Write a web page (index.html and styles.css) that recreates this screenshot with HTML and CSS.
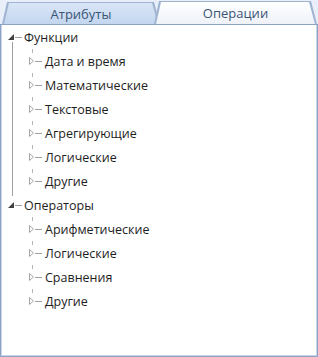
FILE: index.html
```html
<!DOCTYPE html>
<html lang="ru">
<head>
    <meta charset="UTF-8">
    <title>Операции</title>
    <link rel="stylesheet" href="styles.css">
</head>
<body>
    <div class="tabs">
        <div class="tab tab-left"><div class="tab-face">Атрибуты</div></div>
        <div class="tab tab-right active"><div class="tab-face">Операции</div></div>
    </div>

    <div class="panel">
        <ul class="tree">
            <li class="group">
                <div class="row top">
                    <svg width="14" height="24" viewBox="0 0 14 24">
                        <polygon points="6,9 6,15 0,15" fill="#404040"/>
                        <line x1="7" y1="12.5" x2="14" y2="12.5" stroke="#a0a0a0"/>
                        <line x1="4.5" y1="17" x2="4.5" y2="24" stroke="#a0a0a0"/>
                    </svg>
                    <span>Функции</span>
                </div>
                <ul class="children lined">
                    <li class="row child"><svg width="14" height="24" viewBox="0 0 14 24"><line x1="4.5" y1="0" x2="4.5" y2="4" stroke="#b4b4b4"/><polygon points="1.5,8.5 5.5,12 1.5,15.5" fill="none" stroke="#a8a8a8"/><line x1="7" y1="12.5" x2="14" y2="12.5" stroke="#a0a0a0"/></svg><span>Дата и время</span></li>
                    <li class="row child"><svg width="14" height="24" viewBox="0 0 14 24"><line x1="4.5" y1="0" x2="4.5" y2="4" stroke="#b4b4b4"/><polygon points="1.5,8.5 5.5,12 1.5,15.5" fill="none" stroke="#a8a8a8"/><line x1="7" y1="12.5" x2="14" y2="12.5" stroke="#a0a0a0"/></svg><span>Математические</span></li>
                    <li class="row child"><svg width="14" height="24" viewBox="0 0 14 24"><line x1="4.5" y1="0" x2="4.5" y2="4" stroke="#b4b4b4"/><polygon points="1.5,8.5 5.5,12 1.5,15.5" fill="none" stroke="#a8a8a8"/><line x1="7" y1="12.5" x2="14" y2="12.5" stroke="#a0a0a0"/></svg><span>Текстовые</span></li>
                    <li class="row child"><svg width="14" height="24" viewBox="0 0 14 24"><line x1="4.5" y1="0" x2="4.5" y2="4" stroke="#b4b4b4"/><polygon points="1.5,8.5 5.5,12 1.5,15.5" fill="none" stroke="#a8a8a8"/><line x1="7" y1="12.5" x2="14" y2="12.5" stroke="#a0a0a0"/></svg><span>Агрегирующие</span></li>
                    <li class="row child"><svg width="14" height="24" viewBox="0 0 14 24"><line x1="4.5" y1="0" x2="4.5" y2="4" stroke="#b4b4b4"/><polygon points="1.5,8.5 5.5,12 1.5,15.5" fill="none" stroke="#a8a8a8"/><line x1="7" y1="12.5" x2="14" y2="12.5" stroke="#a0a0a0"/></svg><span>Логические</span></li>
                    <li class="row child"><svg width="14" height="24" viewBox="0 0 14 24"><line x1="4.5" y1="0" x2="4.5" y2="4" stroke="#b4b4b4"/><polygon points="1.5,8.5 5.5,12 1.5,15.5" fill="none" stroke="#a8a8a8"/><line x1="7" y1="12.5" x2="14" y2="12.5" stroke="#a0a0a0"/></svg><span>Другие</span></li>
                </ul>
            </li>
            <li class="group">
                <div class="row top">
                    <svg width="14" height="24" viewBox="0 0 14 24">
                        <line x1="4.5" y1="0" x2="4.5" y2="3" stroke="#a0a0a0"/>
                        <polygon points="6,9 6,15 0,15" fill="#404040"/>
                        <line x1="7" y1="12.5" x2="14" y2="12.5" stroke="#a0a0a0"/>
                    </svg>
                    <span>Операторы</span>
                </div>
                <ul class="children">
                    <li class="row child"><svg width="14" height="24" viewBox="0 0 14 24"><line x1="4.5" y1="0" x2="4.5" y2="4" stroke="#b4b4b4"/><polygon points="1.5,8.5 5.5,12 1.5,15.5" fill="none" stroke="#a8a8a8"/><line x1="7" y1="12.5" x2="14" y2="12.5" stroke="#a0a0a0"/></svg><span>Арифметические</span></li>
                    <li class="row child"><svg width="14" height="24" viewBox="0 0 14 24"><line x1="4.5" y1="0" x2="4.5" y2="4" stroke="#b4b4b4"/><polygon points="1.5,8.5 5.5,12 1.5,15.5" fill="none" stroke="#a8a8a8"/><line x1="7" y1="12.5" x2="14" y2="12.5" stroke="#a0a0a0"/></svg><span>Логические</span></li>
                    <li class="row child"><svg width="14" height="24" viewBox="0 0 14 24"><line x1="4.5" y1="0" x2="4.5" y2="4" stroke="#b4b4b4"/><polygon points="1.5,8.5 5.5,12 1.5,15.5" fill="none" stroke="#a8a8a8"/><line x1="7" y1="12.5" x2="14" y2="12.5" stroke="#a0a0a0"/></svg><span>Сравнения</span></li>
                    <li class="row child"><svg width="14" height="24" viewBox="0 0 14 24"><line x1="4.5" y1="0" x2="4.5" y2="4" stroke="#b4b4b4"/><polygon points="1.5,8.5 5.5,12 1.5,15.5" fill="none" stroke="#a8a8a8"/><line x1="7" y1="12.5" x2="14" y2="12.5" stroke="#a0a0a0"/></svg><span>Другие</span></li>
                </ul>
            </li>
        </ul>
    </div>
</body>
</html>
```

FILE: styles.css
```css
html, body {
    margin: 0;
    padding: 0;
}
body {
    width: 318px;
    height: 357px;
    background-color: #e9eff8;
    font-family: 'Open Sans', 'Noto Sans', sans-serif;
    font-size: 12.5px;
    color: #1e1e1e;
    display: flex;
    flex-direction: column;
    overflow: hidden;
}
.tabs {
    display: flex;
    height: 24px;
    flex-shrink: 0;
}
.tab {
    background-color: #9fb3d2;
    height: 23px;
    margin-top: 1px;
    padding: 1px 1px 0;
    box-sizing: border-box;
}
.tab-face {
    height: 100%;
    display: flex;
    align-items: center;
    justify-content: center;
    font-size: 13px;
    color: #3a5576;
}
.tab-left {
    width: 158px;
    margin-left: 2px;
    margin-top: 2px;
    height: 22px;
    clip-path: polygon(0 100%, 5px 0, calc(100% - 6px) 0, 100% 100%);
}
.tab-left .tab-face {
    background: linear-gradient(#dae6f6, #c3d6ef);
    clip-path: polygon(1px 100%, 6px 0, calc(100% - 7px) 0, calc(100% - 1px) 100%);
}
.tab-right {
    width: 163px;
    margin-left: -6px;
    clip-path: polygon(0 100%, 5px 0, calc(100% - 6px) 0, 100% 100%);
}
.tab-right .tab-face {
    background: linear-gradient(#ffffff, #eef2f8);
    clip-path: polygon(1px 100%, 6px 0, calc(100% - 7px) 0, calc(100% - 1px) 100%);
}
.panel {
    flex: 1;
    background-color: #ffffff;
    border: 1px solid #8ea3c4;
    box-shadow: inset 1px 0 0 #c9d5e8, inset -1px -1px 0 #c9d5e8;
}
.tree, .children {
    list-style: none;
    margin: 0;
    padding: 0;
}
.row {
    display: flex;
    align-items: center;
    height: 24px;
}
.row svg {
    flex-shrink: 0;
}
.top {
    padding-left: 7px;
}
.top span {
    margin-left: 2px;
}
.children {
    margin-left: 11px;
    padding-left: 15px;
    border-left: 1px solid transparent;
}
.children.lined {
    border-left-color: #a0a0a0;
}
.child span {
    margin-left: 3px;
}
```
